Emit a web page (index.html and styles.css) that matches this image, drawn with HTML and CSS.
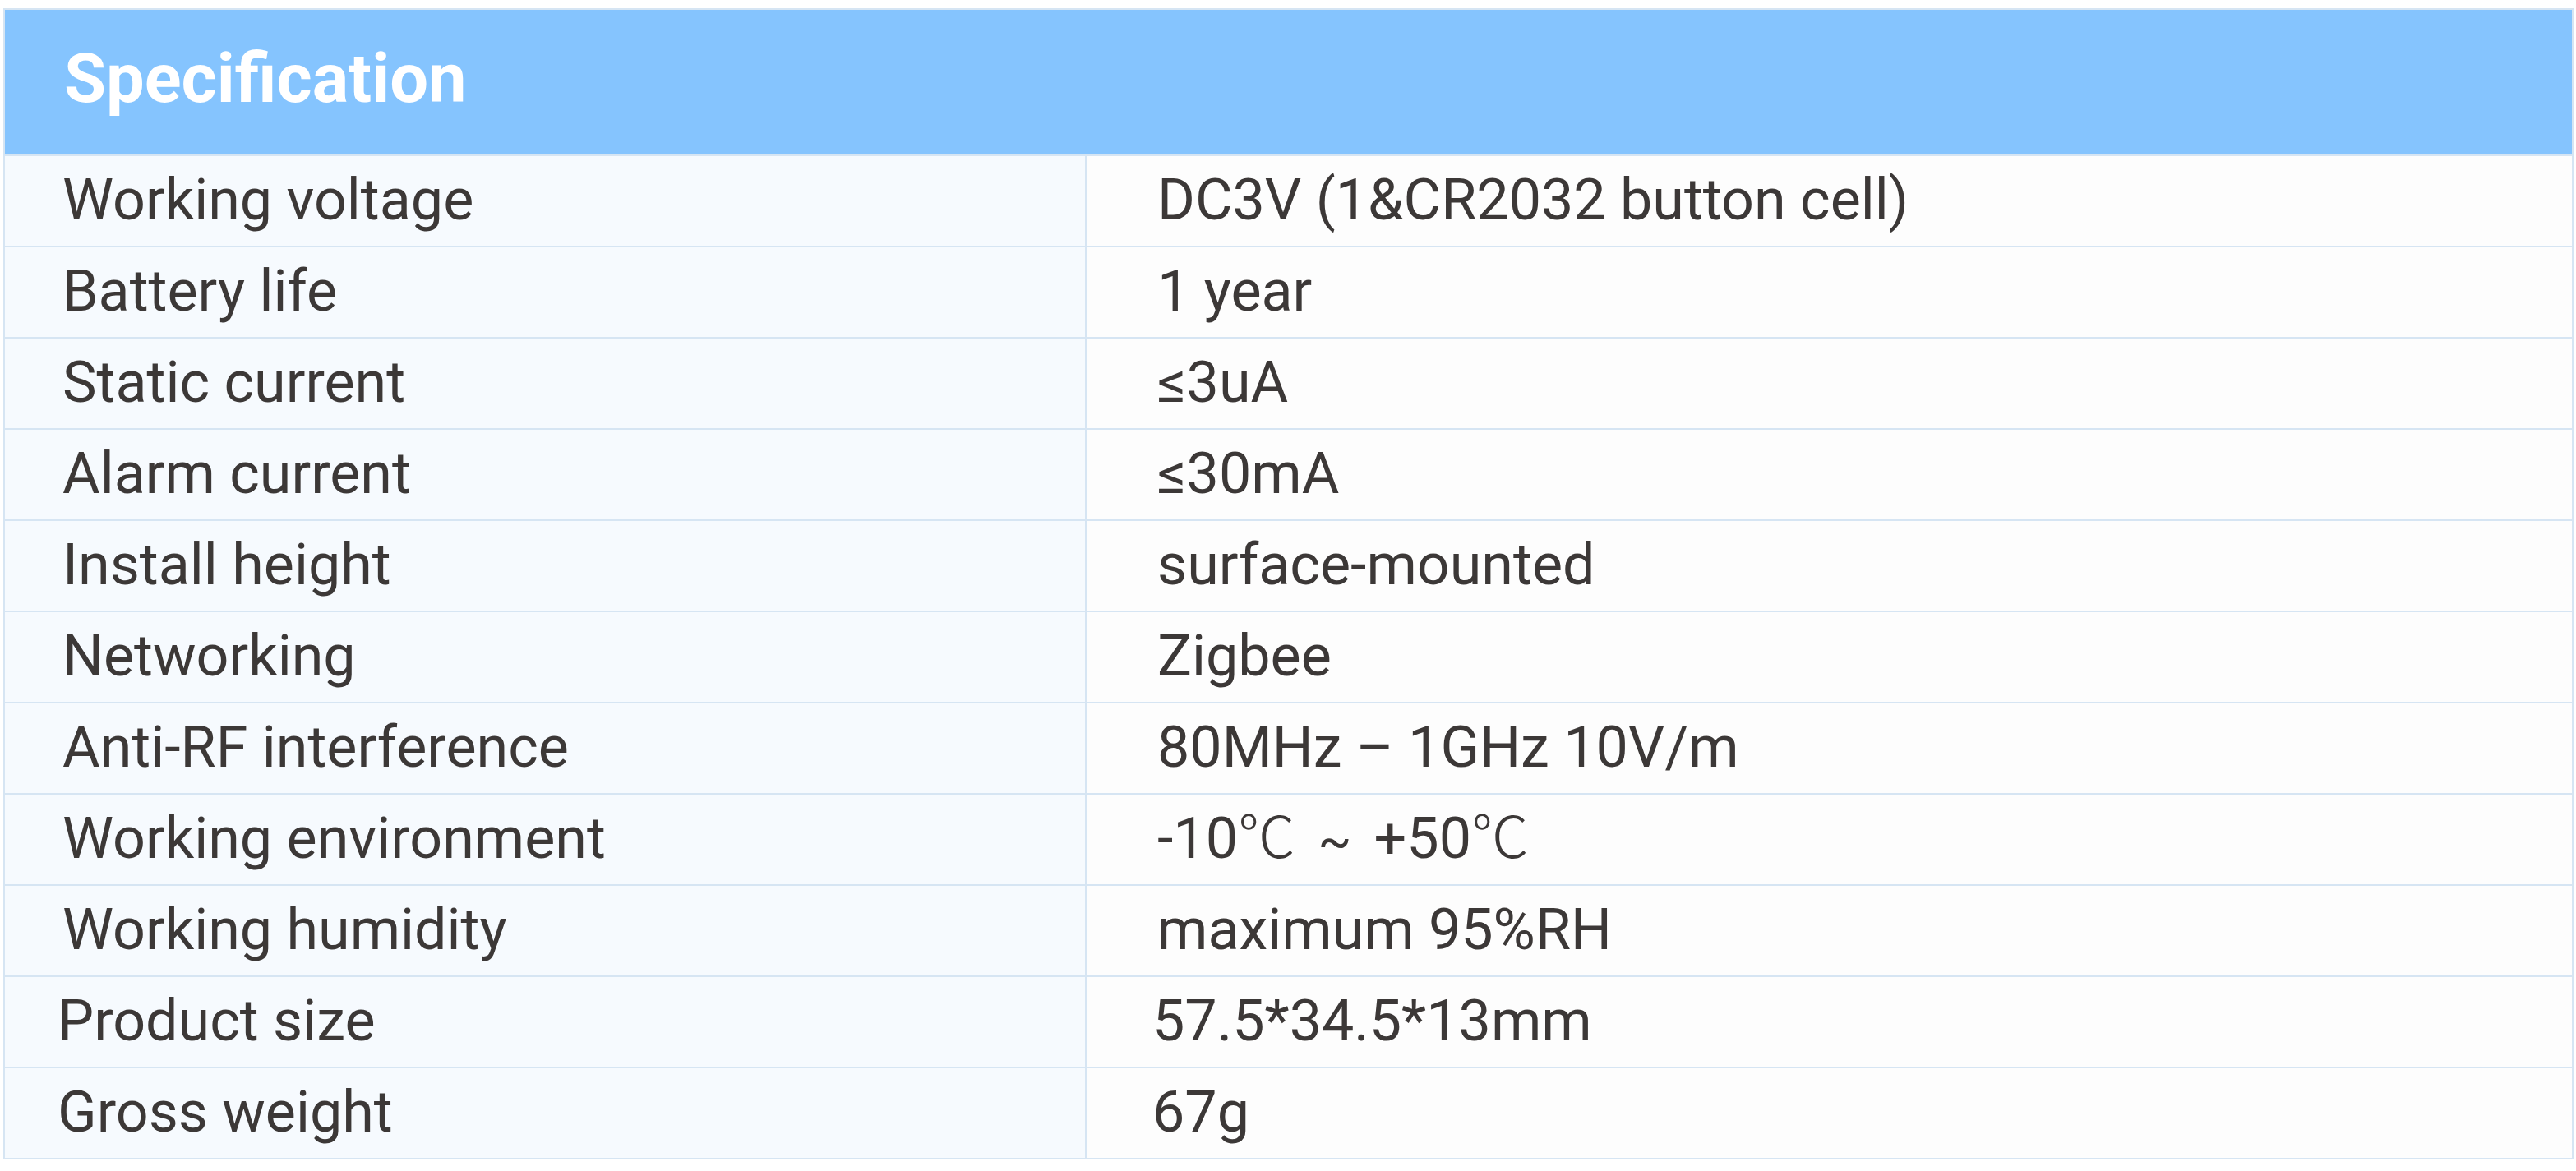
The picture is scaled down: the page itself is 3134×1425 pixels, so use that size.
FILE: index.html
```html
<!DOCTYPE html>
<html lang="en">
<head>
<meta charset="utf-8">
<title>Specification</title>
<link rel="stylesheet" href="styles.css">
</head>
<body>
<table class="spec">
  <colgroup>
    <col class="col-label">
    <col class="col-value">
  </colgroup>
  <thead>
    <tr><th class="spec-head" colspan="2">Specification</th></tr>
  </thead>
  <tbody>
    <tr><td class="label">Working voltage</td><td class="value">DC3V (1&amp;CR2032 button cell)</td></tr>
    <tr><td class="label">Battery life</td><td class="value">1 year</td></tr>
    <tr><td class="label">Static current</td><td class="value">≤3uA</td></tr>
    <tr><td class="label">Alarm current</td><td class="value">≤30mA</td></tr>
    <tr><td class="label">Install height</td><td class="value">surface-mounted</td></tr>
    <tr><td class="label">Networking</td><td class="value">Zigbee</td></tr>
    <tr><td class="label">Anti-RF interference</td><td class="value">80MHz – 1GHz 10V/m</td></tr>
    <tr><td class="label">Working environment</td><td class="value">-10<span class="cjk">℃</span> <span class="tilde">~</span> +50<span class="cjk">℃</span></td></tr>
    <tr><td class="label">Working humidity</td><td class="value">maximum 95%RH</td></tr>
    <tr><td class="label shift">Product size</td><td class="value shift">57.5*34.5*13mm</td></tr>
    <tr><td class="label shift">Gross weight</td><td class="value shift">67g</td></tr>
  </tbody>
</table>
</body>
</html>
```

FILE: styles.css
```css
html, body {
  margin: 0;
  background: #ffffff;
}
body {
  padding: 10px 0 0 4px;
  font-family: Roboto, "Noto Sans CJK SC", "Liberation Sans", sans-serif;
  color: #3c3837;
}
.spec {
  border-collapse: collapse;
  width: 3127px;
  table-layout: fixed;
}
.col-label {
  width: 1316px;
}
.spec th, .spec td {
  border: 2px solid #d6e5f3;
  padding: 0;
  text-align: left;
  vertical-align: middle;
}
.spec-head {
  background: #85c4fe;
  color: #ffffff;
  font-weight: 700;
  font-size: 83px;
  height: 168px;
  line-height: 150px;
  padding: 0 0 8px 72px !important;
}
.spec td {
  height: 105px;
  font-size: 70px;
  line-height: 100px;
  padding-bottom: 4px;
}
.label {
  background: #f6fafe;
  padding-left: 70px !important;
}
.value {
  background: #fdfdfd;
  padding-left: 86px !important;
}
.label.shift {
  padding-left: 64px !important;
}
.value.shift {
  padding-left: 80px !important;
}
.cjk {
  font-family: "Noto Sans CJK SC", sans-serif;
  font-weight: 300;
  line-height: 1;
}
.tilde {
  display: inline-block;
  font-size: 60px;
  line-height: 1;
  margin: 0 10px;
}
```
